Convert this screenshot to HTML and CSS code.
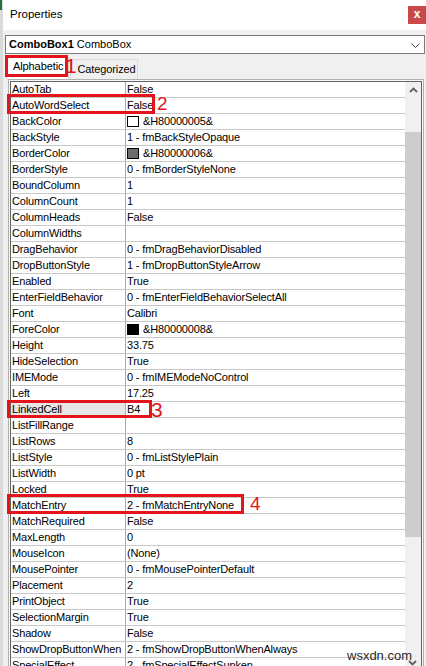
FILE: index.html
```html
<!DOCTYPE html>
<html>
<head>
<meta charset="utf-8">
<link rel="stylesheet" href="styles.css">
</head>
<body>
<div class="window">
  <div class="titlebar">
    <span class="title">Properties</span>
    <span class="close">x</span>
  </div>
  <div class="combo">
    <span><b>ComboBox1</b> ComboBox</span>
    <svg class="combo-chev" width="9" height="5" viewBox="0 0 9 5"><path d="M0.5 0.5 L4.5 4.5 L8.5 0.5" fill="none" stroke="#444" stroke-width="1"/></svg>
  </div>
  <div class="tabs">
    <div class="tab active">Alphabetic</div>
    <div class="tab">Categorized</div>
  </div>
  <div class="frame">
    <div class="grid">
      <div class="rows">
        <div class="row"><div class="name">AutoTab</div><div class="val">False</div></div>
        <div class="row"><div class="name">AutoWordSelect</div><div class="val">False</div></div>
        <div class="row"><div class="name">BackColor</div><div class="val"><span class="swatch sw-white"></span>&amp;H80000005&amp;</div></div>
        <div class="row"><div class="name">BackStyle</div><div class="val">1 - fmBackStyleOpaque</div></div>
        <div class="row"><div class="name">BorderColor</div><div class="val"><span class="swatch sw-gray"></span>&amp;H80000006&amp;</div></div>
        <div class="row"><div class="name">BorderStyle</div><div class="val">0 - fmBorderStyleNone</div></div>
        <div class="row"><div class="name">BoundColumn</div><div class="val">1</div></div>
        <div class="row"><div class="name">ColumnCount</div><div class="val">1</div></div>
        <div class="row"><div class="name">ColumnHeads</div><div class="val">False</div></div>
        <div class="row"><div class="name">ColumnWidths</div><div class="val"></div></div>
        <div class="row"><div class="name">DragBehavior</div><div class="val">0 - fmDragBehaviorDisabled</div></div>
        <div class="row"><div class="name">DropButtonStyle</div><div class="val">1 - fmDropButtonStyleArrow</div></div>
        <div class="row"><div class="name">Enabled</div><div class="val">True</div></div>
        <div class="row"><div class="name">EnterFieldBehavior</div><div class="val">0 - fmEnterFieldBehaviorSelectAll</div></div>
        <div class="row"><div class="name">Font</div><div class="val">Calibri</div></div>
        <div class="row"><div class="name">ForeColor</div><div class="val"><span class="swatch sw-black"></span>&amp;H80000008&amp;</div></div>
        <div class="row"><div class="name">Height</div><div class="val">33.75</div></div>
        <div class="row"><div class="name">HideSelection</div><div class="val">True</div></div>
        <div class="row"><div class="name">IMEMode</div><div class="val">0 - fmIMEModeNoControl</div></div>
        <div class="row"><div class="name">Left</div><div class="val">17.25</div></div>
        <div class="row selected"><div class="name">LinkedCell</div><div class="val">B4</div></div>
        <div class="row"><div class="name">ListFillRange</div><div class="val"></div></div>
        <div class="row"><div class="name">ListRows</div><div class="val">8</div></div>
        <div class="row"><div class="name">ListStyle</div><div class="val">0 - fmListStylePlain</div></div>
        <div class="row"><div class="name">ListWidth</div><div class="val">0 pt</div></div>
        <div class="row"><div class="name">Locked</div><div class="val">True</div></div>
        <div class="row"><div class="name">MatchEntry</div><div class="val">2 - fmMatchEntryNone</div></div>
        <div class="row"><div class="name">MatchRequired</div><div class="val">False</div></div>
        <div class="row"><div class="name">MaxLength</div><div class="val">0</div></div>
        <div class="row"><div class="name">MouseIcon</div><div class="val">(None)</div></div>
        <div class="row"><div class="name">MousePointer</div><div class="val">0 - fmMousePointerDefault</div></div>
        <div class="row"><div class="name">Placement</div><div class="val">2</div></div>
        <div class="row"><div class="name">PrintObject</div><div class="val">True</div></div>
        <div class="row"><div class="name">SelectionMargin</div><div class="val">True</div></div>
        <div class="row"><div class="name">Shadow</div><div class="val">False</div></div>
        <div class="row"><div class="name">ShowDropButtonWhen</div><div class="val">2 - fmShowDropButtonWhenAlways</div></div>
        <div class="row"><div class="name">SpecialEffect</div><div class="val">2 - fmSpecialEffectSunken</div></div>
      </div>
      <div class="scrollbar">
        <div class="sb-btn">
          <svg width="9" height="6" viewBox="0 0 9 6"><path d="M1 5 L4.5 1.5 L8 5" fill="none" stroke="#606060" stroke-width="1.8"/></svg>
        </div>
        <div class="sb-track"><div class="thumb"></div></div>
      </div>
    </div>
  </div>
</div>

<div class="excel-edge"></div>
<div class="mark box1"></div>
<div class="mark box2"></div>
<div class="mark box3"></div>
<div class="mark box4"></div>
<div class="num n1">1</div>
<div class="num n2">2</div>
<div class="num n3">3</div>
<div class="num n4">4</div>
<svg class="sb-down" width="9" height="6" viewBox="0 0 9 6"><path d="M1 1 L4.5 4.5 L8 1" fill="none" stroke="#606060" stroke-width="1.8"/></svg>
<div class="watermark">wsxdn.com</div>
</body>
</html>
```

FILE: styles.css
```css
html, body {
  margin: 0;
  padding: 0;
}

body {
  position: relative;
  width: 426px;
  height: 666px;
  overflow: hidden;
  background: #f0f0f0;
  font-family: "Liberation Sans", Arial, sans-serif;
  font-size: 11px;
  color: #000;
}

.window {
  height: 666px;
  box-sizing: border-box;
  border-left: 3px solid #dadada;
  display: flex;
  flex-direction: column;
}

.titlebar {
  height: 30px;
  flex: none;
  background: #fff;
  display: flex;
  justify-content: space-between;
  align-items: flex-start;
}

.title {
  font-size: 11.5px;
  line-height: 14px;
  padding: 7px 0 0 7px;
  color: #000;
}

.close {
  margin-top: 6px;
  width: 18px;
  height: 18px;
  background: #c9494b;
  color: #fff;
  font-weight: bold;
  font-size: 12px;
  line-height: 16px;
  text-align: center;
}

.combo {
  flex: none;
  margin: 5px 1px 0 2px;
  height: 19px;
  box-sizing: border-box;
  border: 1px solid #7a7a7a;
  background: #fff;
  display: flex;
  align-items: center;
  justify-content: space-between;
  padding: 0 4px 0 3px;
  line-height: 17px;
}

.combo-chev {
  display: block;
  margin-top: 1px;
}

.tabs {
  flex: none;
  margin-top: 1px;
  height: 24px;
  display: flex;
  align-items: flex-end;
  padding-left: 4px;
  letter-spacing: -0.1px;
}

.tab {
  box-sizing: border-box;
  border: 1px solid #d9d9d9;
  border-bottom: none;
  line-height: 16px;
}

.tab.active {
  height: 22px;
  background: #fff;
  padding: 0 5px;
  margin-right: 1px;
}

.tab:not(.active) {
  height: 20px;
  background: #f0f0f0;
  padding: 1px 1px 0 6px;
}

.frame {
  flex: 1;
  min-height: 0;
  margin: 0 2px 0 5px;
  border: 1px solid #b0b0b0;
  border-bottom: none;
  padding: 1px 1px 0 1px;
  background: #f7f7f7;
  display: flex;
}

.grid {
  flex: 1;
  display: flex;
  overflow: hidden;
  border: 1px solid #646464;
  border-bottom: none;
  background: #fff;
}

.rows {
  flex: 1;
  overflow: hidden;
  letter-spacing: -0.15px;
}

.row {
  display: flex;
  height: 16px;
  box-sizing: border-box;
  border-bottom: 1px solid #c8c8c8;
  line-height: 15px;
  white-space: nowrap;
}

.name {
  width: 115px;
  flex: none;
  box-sizing: border-box;
  border-right: 1px solid #a8a8a8;
  padding-left: 1px;
  overflow: hidden;
}

.val {
  flex: 1;
  padding-left: 1px;
  display: flex;
  align-items: center;
  overflow: hidden;
}

.row.selected .name {
  background: #e6e6e6;
}

.swatch {
  display: inline-block;
  width: 12px;
  height: 11px;
  box-sizing: border-box;
  border: 1px solid #000;
  margin-right: 4px;
  flex: none;
}

.sw-white { background: #fff; }
.sw-gray { background: #6d6d6d; }
.sw-black { background: #000; }

.scrollbar {
  width: 16px;
  flex: none;
  background: #f0f0f0;
  display: flex;
  flex-direction: column;
}

.sb-btn {
  height: 17px;
  display: flex;
  justify-content: center;
  padding-top: 5px;
  box-sizing: border-box;
}

.sb-btn svg {
  display: block;
}

.sb-track {
  padding-top: 33px;
}

.thumb {
  height: 405px;
  background: #cdcdcd;
}

.excel-edge {
  position: absolute;
  left: 0;
  top: 0;
  width: 2px;
  height: 10px;
  background: #217346;
}

.mark {
  position: absolute;
  box-sizing: border-box;
  border: 3px solid #e3141b;
}

.box1 { left: 5px; top: 55px; width: 63px; height: 22px; }
.box2 { left: 7px; top: 94px; width: 148px; height: 20px; }
.box3 { left: 7px; top: 400px; width: 145px; height: 18px; }
.box4 { left: 7px; top: 494px; width: 237px; height: 20px; }

.num {
  position: absolute;
  color: #e3141b;
  line-height: 1;
  font-family: "Liberation Sans", Arial, sans-serif;
}

.n1 { left: 65px; top: 55px; font-size: 21px; }
.n2 { left: 157px; top: 94px; font-size: 19px; }
.n3 { left: 151px; top: 399px; font-size: 21px; }
.n4 { left: 250px; top: 494px; font-size: 19px; }

.sb-down {
  position: absolute;
  left: 408px;
  top: 660px;
}

.watermark {
  position: absolute;
  left: 347px;
  top: 649px;
  font-size: 13px;
  line-height: 1;
  color: #2a2a2a;
  font-family: "Liberation Sans", Arial, sans-serif;
}
```
